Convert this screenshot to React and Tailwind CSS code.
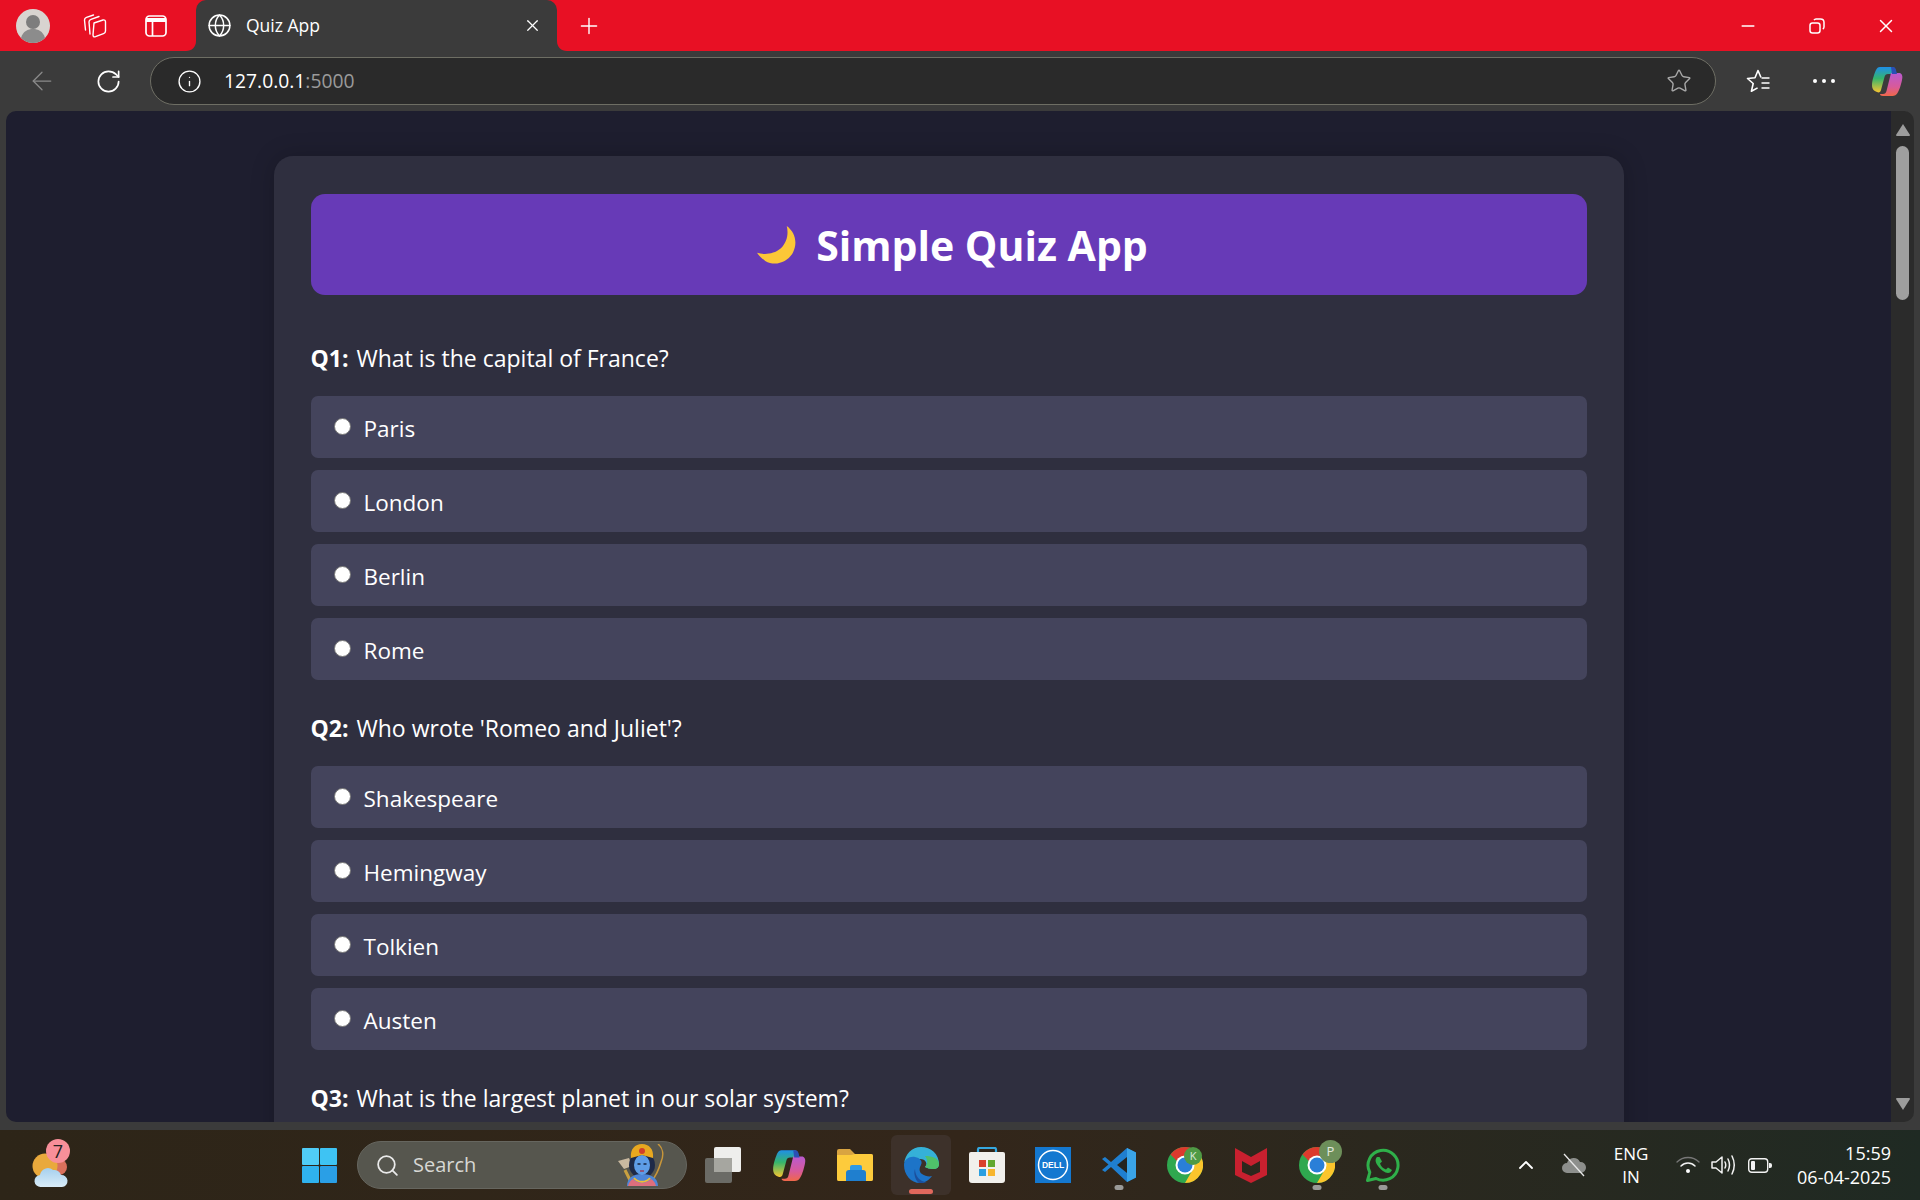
import React from 'react'
import { Info, RotateCw, ArrowLeft, Star, X, Plus, Minus, Globe, ChevronUp, Search } from 'lucide-react'

const QUESTIONS = [
  { label: 'Q1:', text: 'What is the capital of France?', options: ['Paris', 'London', 'Berlin', 'Rome'] },
  { label: 'Q2:', text: "Who wrote 'Romeo and Juliet'?", options: ['Shakespeare', 'Hemingway', 'Tolkien', 'Austen'] },
  { label: 'Q3:', text: 'What is the largest planet in our solar system?', options: [] },
]

// ─── Browser chrome icons ─────────────────────────────────────────────────────
function Avatar() {
  return (
    <svg width="34" height="34" viewBox="0 0 34 34">
      <circle cx="17" cy="17" r="17" fill="#d8d4d0" />
      <circle cx="17" cy="13" r="7" fill="#7d7d7d" />
      <path d="M5 29c2-7 7-9 12-9s10 2 12 9a17 17 0 0 1-24 0z" fill="#8c8c8c" />
    </svg>
  )
}

function Workspaces() {
  return (
    <svg width="26" height="26" viewBox="0 0 26 26" fill="none" stroke="white" strokeWidth="1.4" strokeLinejoin="round" strokeLinecap="round">
      <path d="M13 10l9-3q2.500-.5 2.500 2v9q0 2-2 2.700l-8 3q-2.500.8-2.500-2z" />
      <path d="M9 21L8 9q0-2 2-2.700L18 3.500" />
      <path d="M4.500 17L3.500 7q0-2 2-2.700L12.500 2" />
    </svg>
  )
}

function TabsIcon() {
  return (
    <svg width="22" height="22" viewBox="0 0 22 22" fill="none" stroke="white" strokeWidth="1.7">
      <rect x="1" y="1" width="20" height="20" rx="3.500" />
      <path d="M1 5h20" strokeWidth="4" />
      <path d="M7.500 7v14" />
    </svg>
  )
}

function RestoreIcon() {
  return (
    <svg width="16" height="16" viewBox="0 0 16 16" fill="none" stroke="white" strokeWidth="1.5">
      <rect x="1" y="5" width="10" height="10" rx="2.500" />
      <path d="M5 2.200c.5-.8 1.200-1.200 2-1.200h4.500C13.500 1 15 2.500 15 4.500V9c0 .9-.4 1.600-1.200 2" />
    </svg>
  )
}

function FavoritesIcon() {
  return (
    <svg width="26" height="26" viewBox="0 0 26 26" fill="none" stroke="white" strokeWidth="1.6" strokeLinejoin="round">
      <path d="M16 9.500l-3-7-3 7.300-7.500.7 5.700 5-1.800 7.800 6.200-3.400" />
      <path d="M16.500 10h8M16.500 15h8M16.500 20h8" />
    </svg>
  )
}

function CopilotIcon({ size = 34 }) {
  return (
    <svg width={size} height={size} viewBox="0 0 34 34">
      <defs>
        <linearGradient id="cpA" x1="0" y1="0" x2="0" y2="1">
          <stop offset="0" stopColor="#1f8fe8" />
          <stop offset="0.45" stopColor="#35b56c" />
          <stop offset="1" stopColor="#f7c531" />
        </linearGradient>
        <linearGradient id="cpB" x1="0" y1="0" x2="0" y2="1">
          <stop offset="0" stopColor="#b95ad0" />
          <stop offset="0.6" stopColor="#d85a9a" />
          <stop offset="1" stopColor="#f0684a" />
        </linearGradient>
      </defs>
      <path d="M10 3h12c2 0 3 1 3.500 3l1 4H18c-2 0-3 1-3.500 3L11 26c-.5 2-2 3-4 2-3-1-5-3-5-7 0-5 3-13 4-15 1-2 2-3 4-3z" fill="url(#cpA)" />
      <path d="M21 9h9c2 1 3 3 2 7-1 5-3 11-4.500 13-1 2-3 3-5 3H13c-2 0-3-1-3-2h3c2 0 3-1 3.500-3z" fill="url(#cpB)" />
      <path d="M21 3h2c1.500 0 2.500 1 3 3l1 4h-5z" fill="#2a4fb5" />
    </svg>
  )
}

// ─── Taskbar icons ────────────────────────────────────────────────────────────
function WeatherIcon() {
  return (
    <svg width="38" height="36" viewBox="0 0 38 36">
      <defs>
        <linearGradient id="cloud" x1="0" y1="0" x2="0" y2="1">
          <stop offset="0" stopColor="#a6d0ee" />
          <stop offset="1" stopColor="#d9ecf8" />
        </linearGradient>
      </defs>
      <circle cx="27" cy="15" r="8" fill="#d9705c" />
      <circle cx="13" cy="14" r="12.500" fill="#e9a93c" />
      <path d="M9 35a6 6 0 0 1-1-12 8 8 0 0 1 13-5 7 7 0 0 1 8 5 6 6 0 0 1 1 12z" fill="url(#cloud)" />
    </svg>
  )
}

function WindowsLogo() {
  return (
    <svg width="35" height="35" viewBox="0 0 35 35">
      <rect x="0" y="0" width="17" height="17" rx="1" fill="#50cdf7" />
      <rect x="18" y="0" width="17" height="17" rx="1" fill="#3ec3f3" />
      <rect x="0" y="18" width="17" height="17" rx="1" fill="#2fb2ee" />
      <rect x="18" y="18" width="17" height="17" rx="1" fill="#2a9fe6" />
    </svg>
  )
}

function RamFigure() {
  return (
    <svg width="50" height="42" viewBox="0 0 50 42">
      <path d="M41 0c5 4 6 11 3 18-2 7-5 14-10 20" fill="none" stroke="#c8963a" strokeWidth="1.600" />
      <path d="M8 26l7 14" stroke="#c9a040" strokeWidth="3" />
      <path d="M1 17l11-3 3 8-8 3z" fill="#c9b9a0" />
      <ellipse cx="25" cy="21" rx="13" ry="13" fill="#1e2a48" />
      <path d="M10 42c0-8 6-12 15-12s16 4 16 12z" fill="#4d86d8" />
      <path d="M11 42c1-4 3-6 5-7 5 5 13 5 18 0 2 1 4 3 5 7z" fill="#dd6f7d" />
      <path d="M17 34c4 5 12 5 16 0" fill="none" stroke="#f0bd35" strokeWidth="2" />
      <ellipse cx="25" cy="21" rx="8" ry="10" fill="#5e9de6" />
      <path d="M14 14C13 5 18 0 25 0s12 5 11 14l-11-3z" fill="#e8a820" />
      <circle cx="25" cy="7" r="3" fill="#d0402a" />
      <path d="M20.500 20h3M26.500 20h3" stroke="#16233f" strokeWidth="1.300" />
      <path d="M23 27h4" stroke="#a8324a" strokeWidth="1.300" />
    </svg>
  )
}

function TaskView() {
  return (
    <svg width="36" height="36" viewBox="0 0 36 36">
      <rect x="0" y="11" width="27" height="25" rx="2" fill="#6b6b66" />
      <rect x="9" y="0" width="27" height="25" rx="2" fill="#eeeeec" />
      <rect x="9" y="11" width="18" height="14" fill="#a6a6a0" />
    </svg>
  )
}

function FolderIcon() {
  return (
    <svg width="36" height="32" viewBox="0 0 36 32">
      <path d="M0 2a2 2 0 0 1 2-2h11l5 5h16a2 2 0 0 1 2 2v23a2 2 0 0 1-2 2H2a2 2 0 0 1-2-2z" fill="#d9a441" />
      <path d="M0 6h14l4-1h16a2 2 0 0 1 2 2v23a2 2 0 0 1-2 2H2a2 2 0 0 1-2-2z" fill="#fdcb3c" />
      <path d="M9 24a3 3 0 0 1 3-3h14a3 3 0 0 1 3 3v8H9z" fill="#1f7fcf" />
      <path d="M13 21h12v-3a2 2 0 0 0-2-2h-8a2 2 0 0 0-2 2z" fill="#2f9be6" />
    </svg>
  )
}

function EdgeIcon() {
  return (
    <svg width="36" height="36" viewBox="0 0 36 36">
      <path d="M1 17C2 7 9 0 18 0c10 0 18 7 18 17 0 3-2 5-6 5-3 0-6-1-8-2 3-3 1-8-5-8-7 0-16 0-16 5z" fill="#35b1d8" />
      <path d="M36 17c0 3-2 5-6 5-3 0-6-1-8-2 3-3 3-7 0-11 7 0 14 2 14 8z" fill="#4fc06a" />
      <path d="M1 18c0-6 6-9 11-8 5 1 8 4 6 8-2 3-2 7 1 9 3 2 7 3 10 2-3 4-7 7-12 7C8 36 1 28 1 18z" fill="#1d74c8" />
      <path d="M12 22c0 7 5 13 12 13-3 1-5 1-8 1-3-2-6-9-4-14z" fill="#1c4f9c" />
    </svg>
  )
}

function StoreIcon() {
  return (
    <svg width="36" height="36" viewBox="0 0 36 36">
      <path d="M9 7V2.500A1.500 1.500 0 0 1 10.500 1h15A1.500 1.500 0 0 1 27 2.500V7" fill="none" stroke="#35a8e0" strokeWidth="2.200" />
      <path d="M0 7a2 2 0 0 1 2-2h32a2 2 0 0 1 2 2v26a3 3 0 0 1-3 3H3a3 3 0 0 1-3-3z" fill="#f1f0ec" />
      <rect x="10" y="13" width="7" height="7" fill="#d9402c" />
      <rect x="19" y="13" width="7" height="7" fill="#62a82f" />
      <rect x="10" y="22" width="7" height="7" fill="#2b9fe0" />
      <rect x="19" y="22" width="7" height="7" fill="#f7b52c" />
    </svg>
  )
}

function DellIcon() {
  return (
    <svg width="36" height="36" viewBox="0 0 36 36">
      <rect width="36" height="36" fill="#1478d0" />
      <circle cx="18" cy="18" r="14.500" fill="none" stroke="white" strokeWidth="1.500" />
      <text x="18" y="21" textAnchor="middle" fontSize="8.500" fontWeight="700" fill="white" fontFamily="Liberation Sans, sans-serif">DELL</text>
    </svg>
  )
}

function VsCodeIcon() {
  return (
    <svg width="36" height="36" viewBox="0 0 36 36">
      <path d="M26 1l9 4.500v25L26 35 10 20l-6 5-3-2 6.500-5.500L1 12l3-2 6 5z" fill="#1f7fd0" />
      <path d="M26 1l9 4.500v25L26 35z" fill="#3aa4e8" />
      <path d="M26 10v16l-10-8z" fill="#24241f" />
    </svg>
  )
}

function ChromeIcon({ letter, badgeClass }) {
  return (
    <div className="relative w-[36px] h-[36px]">
      <svg width="36" height="36" viewBox="0 0 36 36">
        <circle cx="18" cy="18" r="18" fill="#2fa84f" />
        <path d="M18 0a18 18 0 0 1 15.600 9H18a9 9 0 0 0-8 5L3.500 7.500A18 18 0 0 1 18 0z" fill="#dd3a2d" />
        <path d="M33.600 9A18 18 0 0 1 18 36l7.800-13.500A9 9 0 0 0 26 14z" fill="#fbc52c" />
        <circle cx="18" cy="18" r="9.500" fill="white" />
        <circle cx="18" cy="18" r="7.500" fill="#2a7fd8" />
      </svg>
      <span className={`absolute rounded-full text-center text-white/80 ${badgeClass}`}>{letter}</span>
    </div>
  )
}

function McAfeeIcon() {
  return (
    <svg width="32" height="35" viewBox="0 0 32 35">
      <path fillRule="evenodd" d="M0 0l16 9 16-9v27l-16 8-16-8zM7 13l9 5 9-5v11l-9 4-9-4z" fill="#c8202f" />
    </svg>
  )
}

function WhatsAppIcon() {
  return (
    <svg width="36" height="36" viewBox="0 0 36 36" fill="none">
      <path d="M2.500 33.500l2.300-8.200A15 15 0 1 1 11 31.500z" stroke="#2fb04a" strokeWidth="3" strokeLinejoin="round" />
      <path d="M12 10c-2 2-2 5 1 9s7 7 10 7c2 0 3-1 4-3l-4-2.500-2 2c-3-1-5-3-6-6l2-2-2.500-4.500z" fill="#2fb04a" />
    </svg>
  )
}

function CloudOff() {
  return (
    <svg width="26" height="24" viewBox="0 0 26 24">
      <path d="M6 20a5 5 0 0 1 0-10 7 7 0 0 1 13-1 5.500 5.500 0 0 1 1 11z" fill="#8d8f8c" />
      <path d="M3 1l20 22" stroke="#e8e8e8" strokeWidth="1.300" />
    </svg>
  )
}

function WifiIcon() {
  return (
    <svg width="24" height="18" viewBox="0 0 24 18" fill="none" strokeLinecap="round">
      <path d="M1 6c6-6 16-6 22 0" stroke="#777" strokeWidth="1.300" />
      <path d="M5 10c4-4 10-4 14 0" stroke="#f2f2f2" strokeWidth="1.500" />
      <circle cx="12" cy="15" r="2" fill="#fff" />
    </svg>
  )
}

function VolumeIcon() {
  return (
    <svg width="25" height="22" viewBox="0 0 25 22" fill="none" stroke="#f2f2f2" strokeWidth="1.500" strokeLinejoin="round">
      <path d="M1 8h4l6-5v16l-6-5H1z" />
      <path d="M14 8c1 2 1 4 0 6M17 5c2 4 2 8 0 12M21 2c3 6 3 12 0 18" strokeLinecap="round" />
    </svg>
  )
}

function BatteryIcon() {
  return (
    <svg width="24" height="15" viewBox="0 0 24 15">
      <rect x="0.700" y="0.700" width="19" height="13.600" rx="3" fill="none" stroke="#f2f2f2" strokeWidth="1.400" />
      <rect x="3" y="3" width="4" height="9" rx="1" fill="#f2f2f2" />
      <path d="M21 5h1a2 2 0 0 1 2 2v1a2 2 0 0 1-2 2h-1z" fill="#f2f2f2" />
    </svg>
  )
}

function Dot() {
  return <span className="absolute bottom-[5px] left-1/2 -translate-x-1/2 w-[9px] h-[5px] rounded-full bg-[#9a9a98]" />
}

// ─── Quiz page ────────────────────────────────────────────────────────────────
function Question({ q }) {
  return (
    <div className="mb-[33px]">
      <p className="text-[23px] leading-[30px] mb-[23px]">
        <strong className="font-bold mr-[2px]">{q.label}</strong> {q.text}
      </p>
      <div className="flex flex-col gap-[12px]">
        {q.options.map(o => (
          <label key={o} className="h-[62px] flex items-center pl-[23px] bg-[#44445c] rounded-[7px] text-[22.500px]">
            <input type="radio" name={q.label} className="appearance-none w-[17px] h-[17px] rounded-full bg-white border border-[#767676] -mt-[1px] mr-[13px]" />
            <span className="mt-[3px]">{o}</span>
          </label>
        ))}
      </div>
    </div>
  )
}

function QuizPage() {
  return (
    <div className="flex-1 min-w-0 bg-[#1e1e2f] overflow-hidden rounded-bl-[10px] rounded-tl-[10px] flex justify-center">
      <div className="w-[1350px] h-fit mt-[45px] px-[37px] pt-[38px] bg-[#2f2f3f] rounded-[19px] shadow-[0_0_25px_rgba(0,0,0,0.2)] text-white">
        <h1 className="h-[101px] mb-[48px] pl-[7px] flex items-center justify-center bg-[#673ab7] rounded-[14px] text-[41px] font-bold">
          <svg width="41" height="41" viewBox="0 0 40 40" className="mr-[19px] mt-[2px]">
            <path d="M30 1c8 6 11 16 6 26-5 9-17 14-27 8-3-2-6-5-8-8 6 2 16 2 23-4 6-6 8-14 6-22z" fill="#fcc737" />
          </svg>
          <span className="mt-[3px]">Simple Quiz App</span>
        </h1>
        {QUESTIONS.map(q => <Question key={q.label} q={q} />)}
      </div>
    </div>
  )
}

export default function App() {
  return (
    <div className="w-[1920px] h-[1200px] overflow-hidden flex flex-col bg-[#3b3b3b] font-['Open_Sans',sans-serif]">
      {/* Title bar */}
      <div className="h-[51px] shrink-0 flex items-center bg-[#e81024] text-white">
        <div className="w-[66px] flex justify-center"><Avatar /></div>
        <div className="w-[62px] flex justify-center -ml-[3px]"><Workspaces /></div>
        <div className="w-[62px] flex justify-center"><TabsIcon /></div>
        <div className="relative ml-[9px] w-[361px] h-[51px] pl-[11px] pr-[15px] flex items-center bg-[#3b3b3b] rounded-t-[10px]">
          <Globe size={25} strokeWidth={1.4} className="mr-[14px]" />
          <span className="flex-1 text-[17.500px]">Quiz App</span>
          <X size={19} strokeWidth={1.6} />
          <svg width="10" height="10" viewBox="0 0 10 10" className="absolute bottom-0 -left-[10px]"><path d="M10 0v10H0c6 0 10-4 10-10z" fill="#3b3b3b" /></svg>
          <svg width="10" height="10" viewBox="0 0 10 10" className="absolute bottom-0 -right-[10px]"><path d="M0 0v10h10C4 10 0 6 0 0z" fill="#3b3b3b" /></svg>
        </div>
        <div className="ml-[18px] w-[28px] flex justify-center"><Plus size={26} strokeWidth={1.3} /></div>
        <div className="flex-1" />
        <div className="w-[69px] flex justify-center"><Minus size={20} strokeWidth={1.8} /></div>
        <div className="w-[69px] flex justify-center"><RestoreIcon /></div>
        <div className="w-[69px] flex justify-center"><X size={22} strokeWidth={1.6} /></div>
      </div>

      {/* Toolbar */}
      <div className="h-[60px] shrink-0 flex items-center text-white">
        <div className="w-[84px] flex justify-center"><ArrowLeft size={30} strokeWidth={1} className="text-[#8a8a8a]" /></div>
        <div className="w-[50px] flex justify-center -ml-[1px]"><RotateCw size={27} strokeWidth={1.5} /></div>
        <div className="ml-[17px] w-[1566px] h-[48px] px-[26px] flex items-center bg-[#2a2a2a] border border-[#6e6e64] rounded-full">
          <Info size={25} strokeWidth={1.3} className="mr-[22px]" />
          <span className="flex-1 text-[19.300px]">127.0.0.1<span className="text-[#9a9a9a]">:5000</span></span>
          <Star size={26} strokeWidth={1.3} className="text-[#a8a8a8] -mr-[3px]" />
        </div>
        <div className="ml-[29px] w-[26px] flex justify-center"><FavoritesIcon /></div>
        <div className="ml-[40px] w-[26px] flex justify-center gap-[5px]">
          <span className="shrink-0 w-[4px] h-[4px] rounded-full bg-white" />
          <span className="shrink-0 w-[4px] h-[4px] rounded-full bg-white" />
          <span className="shrink-0 w-[4px] h-[4px] rounded-full bg-white" />
        </div>
        <div className="ml-[33px]"><CopilotIcon /></div>
      </div>

      {/* Page + scrollbar */}
      <div className="h-[1011px] shrink-0 flex pl-[6px] pr-[6px]">
        <QuizPage />
        <div className="w-[23px] shrink-0 flex flex-col items-center bg-[#2b2b2b] rounded-r-[10px]">
          <svg width="14" height="12" viewBox="0 0 14 12" className="mt-[13px]"><path d="M7 0l7 11a1 1 0 0 1-1 1H1a1 1 0 0 1-1-1z" fill="#9c9c9c" /></svg>
          <div className="w-[13px] h-[154px] mt-[10px] rounded-full bg-[#9f9f9f]" />
          <div className="flex-1" />
          <svg width="14" height="12" viewBox="0 0 14 12" className="mb-[12px]"><path d="M7 12L14 1a1 1 0 0 0-1-1H1a1 1 0 0 0-1 1z" fill="#9c9c9c" /></svg>
        </div>
      </div>

      {/* Gap between window and taskbar */}
      <div className="h-[8px] shrink-0 bg-[#3b3b3b]" />

      {/* Taskbar */}
      <div className="flex-1 flex items-center bg-gradient-to-r from-[#2d2518] via-[#33261a] to-[#1f2a23] text-white">
        <div className="relative ml-[32px] w-[38px] h-[44px] flex items-end mt-[2px]">
          <WeatherIcon />
          <span className="absolute -top-[5px] left-[14px] w-[24px] h-[24px] rounded-full bg-[#f78f99] text-[18px] leading-[24px] text-center text-[#222]">7</span>
        </div>
        <div className="ml-[232px]"><WindowsLogo /></div>
        <div className="ml-[20px] w-[330px] h-[48px] pl-[17px] pr-[19px] flex items-center rounded-full bg-[#56564e] border border-[#66665f]">
          <Search size={25} strokeWidth={1.7} className="text-[#eaeaea]" />
          <span className="flex-1 ml-[13px] text-[20px] text-[#d8d8d4]">Search</span>
          <RamFigure />
        </div>
        <div className="ml-[3px] flex items-center">
          <div className="w-[66px] flex justify-center"><TaskView /></div>
          <div className="w-[66px] flex justify-center"><CopilotIcon size={36} /></div>
          <div className="w-[66px] flex justify-center"><FolderIcon /></div>
          <div className="relative w-[60px] h-[60px] mx-[3px] flex items-center justify-center bg-[#3d312a] rounded-[6px]">
            <EdgeIcon />
            <span className="absolute bottom-[1px] left-1/2 -translate-x-1/2 w-[24px] h-[5px] rounded-full bg-[#e0685c]" />
          </div>
          <div className="w-[66px] flex justify-center"><StoreIcon /></div>
          <div className="w-[66px] flex justify-center"><DellIcon /></div>
          <div className="relative w-[66px] h-[60px] flex items-center justify-center"><VsCodeIcon /><Dot /></div>
          <div className="w-[66px] flex justify-center"><ChromeIcon letter="K" badgeClass="left-[17px] top-0 w-[18px] h-[18px] bg-[#4f9a45] text-[11px] leading-[18px]" /></div>
          <div className="w-[66px] flex justify-center"><McAfeeIcon /></div>
          <div className="relative w-[66px] h-[60px] flex items-center justify-center"><ChromeIcon letter="P" badgeClass="left-[20px] -top-[7px] w-[23px] h-[23px] bg-[#6d8f5a] text-[13px] leading-[23px]" /><Dot /></div>
          <div className="relative w-[66px] h-[60px] flex items-center justify-center"><WhatsAppIcon /><Dot /></div>
        </div>
        <div className="flex-1" />
        <ChevronUp size={24} strokeWidth={1.8} className="mr-[23px]" />
        <div className="mr-[21px]"><CloudOff /></div>
        <div className="w-[46px] mr-[22px] text-center text-[17px] leading-[23px]">ENG<br />IN</div>
        <div className="mr-[11px]"><WifiIcon /></div>
        <div className="mr-[12px]"><VolumeIcon /></div>
        <div className="mr-[25px]"><BatteryIcon /></div>
        <div className="mr-[29px] text-right text-[18px] leading-[24px] whitespace-nowrap">15:59<br />06-04-2025</div>
      </div>
    </div>
  )
}
